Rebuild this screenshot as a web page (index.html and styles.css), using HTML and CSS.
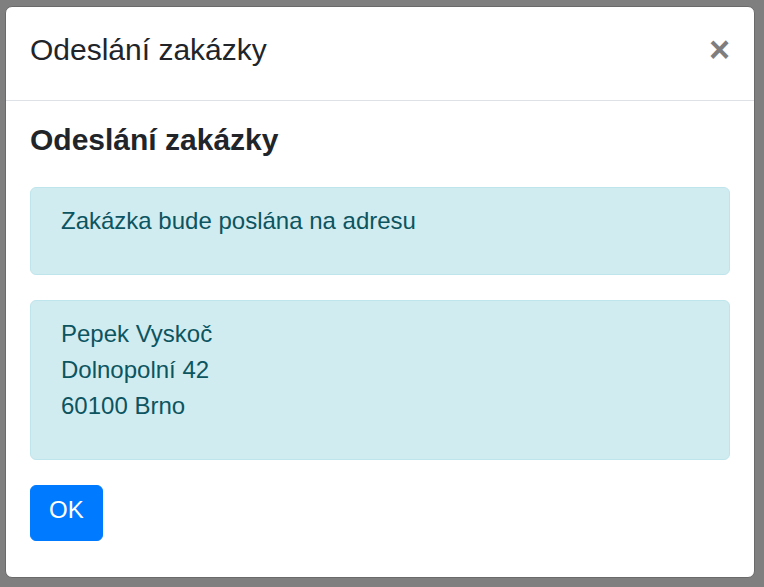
FILE: index.html
```html
<!DOCTYPE html>
<html lang="cs">
<head>
    <meta charset="UTF-8">
    <title>Odeslání zakázky</title>
    <link rel="stylesheet" href="styles.css">
</head>
<body>

<div class="modal">
    <div class="modal-header">
        <h5 class="modal-title">Odeslání zakázky</h5>
        <button class="close" type="button" aria-label="Close">&times;</button>
    </div>
    <div class="modal-body">
        <h4 class="heading">Odeslání zakázky</h4>
        <div class="alert">
            <p>Zakázka bude poslána na adresu</p>
        </div>
        <div class="alert">
            <p>Pepek Vyskoč<br>Dolnopolní 42<br>60100 Brno</p>
        </div>
        <button class="btn" type="button">OK</button>
    </div>
</div>

</body>
</html>
```

FILE: styles.css
```css
html, body {
    height: 100%;
}

body {
    margin: 0;
    padding: 6px 9px 0 5px;
    box-sizing: border-box;
    background-color: #7f7f7f;
    font-family: "Liberation Sans", Arial, sans-serif;
    font-size: 24px;
    line-height: 1.5;
    color: #212529;
}

.modal {
    background-color: #fff;
    border: 1px solid #6a6a6a;
    border-radius: 7px;
    overflow: hidden;
}

.modal-header {
    display: flex;
    align-items: flex-start;
    padding: 20px 24px 28px;
    border-bottom: 1px solid #dee2e6;
}

.modal-title {
    margin: 0;
    font-size: 30px;
    font-weight: 400;
    line-height: 45px;
}

.close {
    margin-left: auto;
    margin-top: 0;
    padding: 0;
    border: 0;
    background: transparent;
    font-family: inherit;
    font-size: 36px;
    font-weight: 700;
    line-height: 45px;
    color: #000;
    opacity: .5;
    cursor: pointer;
}

.modal-body {
    padding: 21px 24px 36px;
}

.heading {
    margin: 0 0 29px;
    font-size: 30px;
    font-weight: 700;
    line-height: 36px;
}

.alert {
    margin-bottom: 25px;
    padding: 15px 30px 35px;
    background-color: #d1ecf1;
    border: 1px solid #bee5eb;
    border-radius: 6px;
    color: #0c5460;
}

.alert p {
    margin: 0;
}

.btn {
    display: block;
    padding: 6px 18px 12px;
    border: 1px solid #007bff;
    border-radius: 6px;
    background-color: #007bff;
    color: #fff;
    font-family: inherit;
    font-size: 24px;
    line-height: 36px;
    cursor: pointer;
}
```
